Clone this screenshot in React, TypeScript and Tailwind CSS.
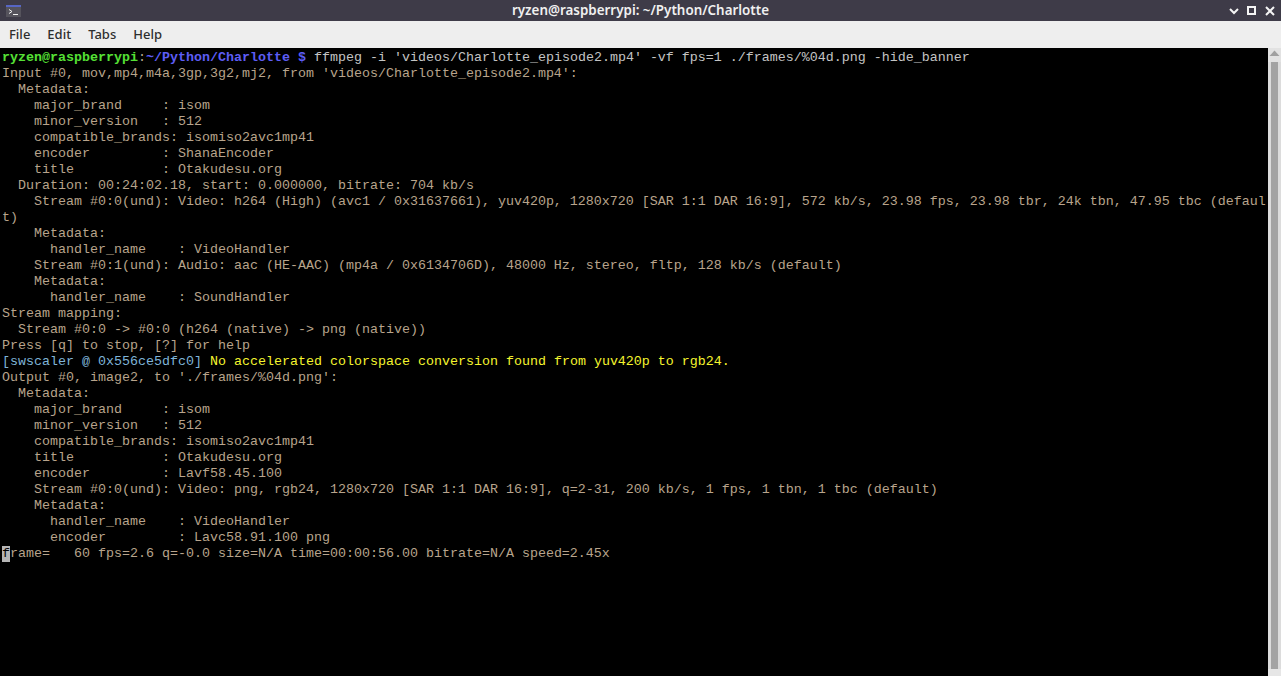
const rows = [
  "Input #0, mov,mp4,m4a,3gp,3g2,mj2, from 'videos/Charlotte_episode2.mp4':",
  "  Metadata:",
  "    major_brand     : isom",
  "    minor_version   : 512",
  "    compatible_brands: isomiso2avc1mp41",
  "    encoder         : ShanaEncoder",
  "    title           : Otakudesu.org",
  "  Duration: 00:24:02.18, start: 0.000000, bitrate: 704 kb/s",
  "    Stream #0:0(und): Video: h264 (High) (avc1 / 0x31637661), yuv420p, 1280x720 [SAR 1:1 DAR 16:9], 572 kb/s, 23.98 fps, 23.98 tbr, 24k tbn, 47.95 tbc (defaul",
  "t)",
  "    Metadata:",
  "      handler_name    : VideoHandler",
  "    Stream #0:1(und): Audio: aac (HE-AAC) (mp4a / 0x6134706D), 48000 Hz, stereo, fltp, 128 kb/s (default)",
  "    Metadata:",
  "      handler_name    : SoundHandler",
  "Stream mapping:",
  "  Stream #0:0 -> #0:0 (h264 (native) -> png (native))",
  "Press [q] to stop, [?] for help",
];

const rows2 = [
  "Output #0, image2, to './frames/%04d.png':",
  "  Metadata:",
  "    major_brand     : isom",
  "    minor_version   : 512",
  "    compatible_brands: isomiso2avc1mp41",
  "    title           : Otakudesu.org",
  "    encoder         : Lavf58.45.100",
  "    Stream #0:0(und): Video: png, rgb24, 1280x720 [SAR 1:1 DAR 16:9], q=2-31, 200 kb/s, 1 fps, 1 tbn, 1 tbc (default)",
  "    Metadata:",
  "      handler_name    : VideoHandler",
  "      encoder         : Lavc58.91.100 png",
];

function Row({ children }: { children: React.ReactNode }) {
  return <div className="h-4 leading-4 whitespace-pre">{children}</div>;
}

export default function App() {
  return (
    <div className="w-[1281px] h-[676px] flex flex-col overflow-hidden bg-black">
      {/* window title */}
      <div className="h-[21px] shrink-0 bg-[#3e3b48] flex items-center">
        <div className="flex-1 flex pl-[6px]">
          <svg width="15" height="12" viewBox="0 0 15 12" className="mt-[1px]">
            <rect width="15" height="12" fill="#55535c" />
            <rect width="15" height="2" fill="#5766c4" />
            <path d="M3 4.5l3 2-3 2" fill="none" stroke="#f0f0f0" strokeWidth="1" />
            <path d="M7 9.5h5" stroke="#f0f0f0" strokeWidth="1" />
          </svg>
        </div>
        <div className="text-[13.4px] font-semibold text-[#f0f0f0] font-['Noto_Sans',sans-serif]">
          ryzen@raspberrypi: ~/Python/Charlotte
        </div>
        <div className="flex-1 flex items-center justify-end gap-[8px] pr-[6px]">
          <svg width="10" height="10" viewBox="0 0 10 10">
            <path d="M1 3l4 4 4-4" fill="none" stroke="#f4f4f4" strokeWidth="2" />
          </svg>
          <svg width="10" height="10" viewBox="0 0 10 10">
            <rect x="1" y="1" width="7" height="7" fill="none" stroke="#f4f4f4" strokeWidth="2" />
          </svg>
          <svg width="10" height="10" viewBox="0 0 10 10">
            <path d="M1 1l8 8M9 1l-8 8" fill="none" stroke="#f4f4f4" strokeWidth="2" />
          </svg>
        </div>
      </div>

      {/* menu bar */}
      <div className="h-[27px] shrink-0 bg-[#eeeeee] flex items-center pl-[9px] gap-[17px] text-[13px] font-medium text-[#2e2e2e] font-['Noto_Sans',sans-serif]">
        <span>File</span>
        <span>Edit</span>
        <span>Tabs</span>
        <span>Help</span>
      </div>

      {/* terminal */}
      <div className="flex-1 flex min-h-0">
        <div className="flex-1 bg-black pt-[2px] pl-[2px] overflow-hidden text-[13.33px] text-[#b8a48c] font-['Liberation_Mono',monospace]">
          <Row>
            <span className="font-bold text-[#55e035]">ryzen@raspberrypi</span>
            <span>:</span>
            <span className="font-bold text-[#5d5df5]">~/Python/Charlotte $</span>
            <span className="text-[#c4c4c4]"> ffmpeg -i 'videos/Charlotte_episode2.mp4' -vf fps=1 ./frames/%04d.png -hide_banner</span>
          </Row>
          {rows.map((r, i) => (
            <Row key={i}>{r}</Row>
          ))}
          <Row>
            <span className="text-[#7fb4d8]">[swscaler @ 0x556ce5dfc0]</span>
            <span className="text-[#f5f52e]"> No accelerated colorspace conversion found from yuv420p to rgb24.</span>
          </Row>
          {rows2.map((r, i) => (
            <Row key={i}>{r}</Row>
          ))}
          <Row>
            <span className="inline-block h-4 leading-4 align-top bg-[#b5b5b5] text-black">f</span>
            rame=   60 fps=2.6 q=-0.0 size=N/A time=00:00:56.00 bitrate=N/A speed=2.45x
          </Row>
        </div>

        {/* scrollbar */}
        <div className="w-[13px] shrink-0 bg-[#dcdcdc] flex flex-col items-center">
          <svg width="13" height="14" viewBox="0 0 13 14" className="shrink-0 bg-[#e2e2e2]">
            <path d="M6.5 2.5L11.5 8H1.5z" fill="#a0a0a0" />
          </svg>
          <div className="flex-1 w-[7px] bg-[#a3a3a3]" />
          <div className="h-[7px] w-full bg-[#e6e6e6]" />
        </div>
      </div>
    </div>
  );
}
